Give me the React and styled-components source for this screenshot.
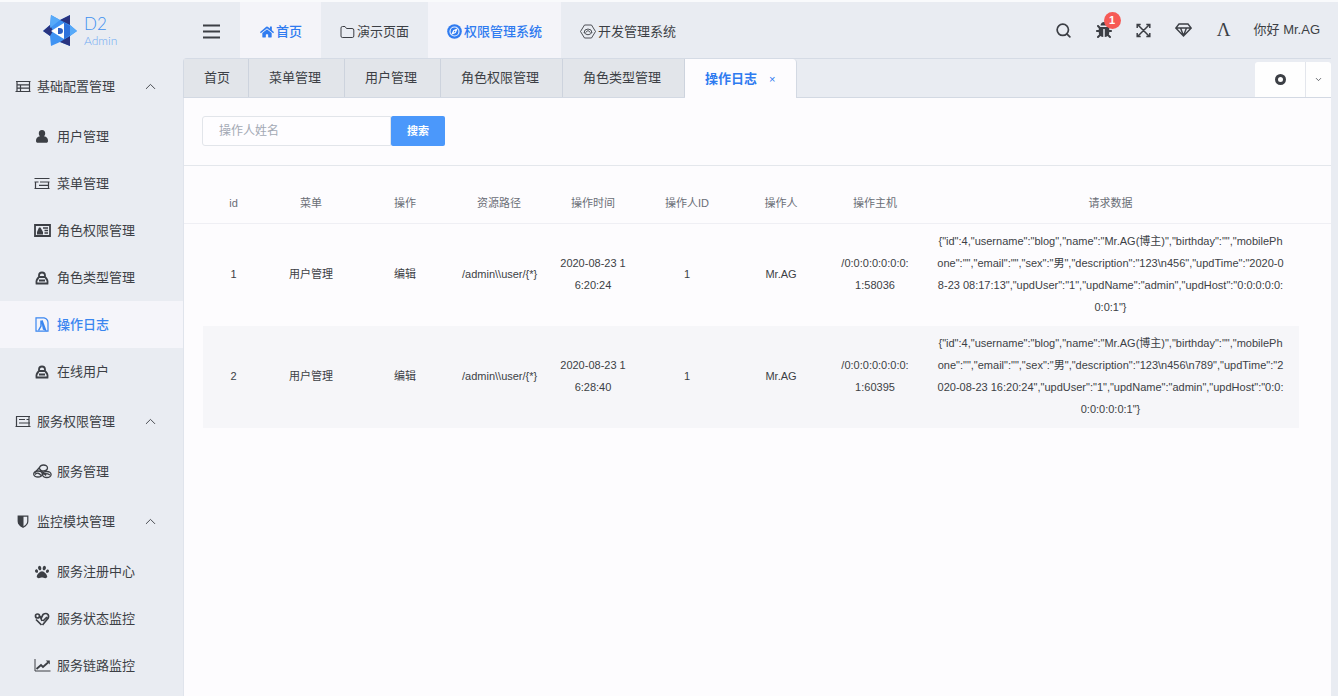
import React, { useState } from "react";
import styled, { createGlobalStyle } from "styled-components";
import { FaHome, FaBug, FaPaw } from "react-icons/fa";
import { Search, ChevronUp, ChevronDown } from "lucide-react";

const sideMenu = [
    {
        title: "基础配置管理",
        icon: "list",
        items: [
            { title: "用户管理", icon: "user" },
            { title: "菜单管理", icon: "rows" },
            { title: "角色权限管理", icon: "card" },
            { title: "角色类型管理", icon: "role" },
            { title: "操作日志", icon: "log", active: true },
            { title: "在线用户", icon: "role" },
        ],
    },
    {
        title: "服务权限管理",
        icon: "server",
        items: [{ title: "服务管理", icon: "cubes" }],
    },
    {
        title: "监控模块管理",
        icon: "shield",
        items: [
            { title: "服务注册中心", icon: "paw" },
            { title: "服务状态监控", icon: "pulse" },
            { title: "服务链路监控", icon: "chart" },
        ],
    },
];

const topMenu = [
    { title: "首页", icon: "home", active: true },
    { title: "演示页面", icon: "folder" },
    { title: "权限管理系统", icon: "compass", active: true },
    { title: "开发管理系统", icon: "hexagon" },
];

const tabs = ["首页", "菜单管理", "用户管理", "角色权限管理", "角色类型管理"];

const columns = ["id", "菜单", "操作", "资源路径", "操作时间", "操作人ID", "操作人", "操作主机", "请求数据"];

const logs = [
    {
        id: 1,
        menu: "用户管理",
        opt: "编辑",
        uri: "/admin\\\\user/{*}",
        time: "2020-08-23 1\n6:20:24",
        userId: 1,
        user: "Mr.AG",
        host: "/0:0:0:0:0:0:0:\n1:58036",
        body:
            '{"id":4,"username":"blog","name":"Mr.AG(博主)","birthday":"","mobilePh\n' +
            'one":"","email":"","sex":"男","description":"123\\n456","updTime":"2020-0\n' +
            '8-23 08:17:13","updUser":"1","updName":"admin","updHost":"0:0:0:0:0:\n' +
            '0:0:1"}',
    },
    {
        id: 2,
        menu: "用户管理",
        opt: "编辑",
        uri: "/admin\\\\user/{*}",
        time: "2020-08-23 1\n6:28:40",
        userId: 1,
        user: "Mr.AG",
        host: "/0:0:0:0:0:0:0:\n1:60395",
        body:
            '{"id":4,"username":"blog","name":"Mr.AG(博主)","birthday":"","mobilePh\n' +
            'one":"","email":"","sex":"男","description":"123\\n456\\n789","updTime":"2\n' +
            '020-08-23 16:20:24","updUser":"1","updName":"admin","updHost":"0:0:\n' +
            '0:0:0:0:0:1"}',
    },
];

const line = { fill: "none", stroke: "currentColor", strokeWidth: 1.2 };

const Icon = ({ name }) => {
    switch (name) {
        case "home":
            return <FaHome size={14} />;
        case "paw":
            return <FaPaw size={14} />;
        case "card":
            return (
                <svg width="17" height="13" viewBox="0 0 17 13" {...line}>
                    <path d="M1 1h15v11H1z" strokeWidth="1.800" />
                    <path d="M3 10.500V8l2-4.500h1.500L9 8v2.500z" fill="currentColor" stroke="none" />
                    <path d="M9 4h5M10.500 6.500H14M10.500 9H14" strokeWidth="1.500" />
                </svg>
            );
        case "folder":
            return (
                <svg width="15" height="14" viewBox="0 0 15 14" {...line} strokeWidth="1">
                    <path d="M1 11V3q0-1.500 1.500-1.500H5L6.500 3.500h5.500q1.800 0 1.800 1.500v6q0 1.500-1.500 1.500h-10Q1 12.500 1 11z" />
                </svg>
            );
        case "compass":
            return (
                <svg width="15" height="15" viewBox="0 0 15 15">
                    <circle cx="7.5" cy="7.500" r="7.300" fill="#2f7bf0" />
                    <circle cx="7.5" cy="7.500" r="4.500" fill="none" stroke="#e8f0fd" strokeWidth="1.2" />
                    <path d="M11 4 8.700 9 4 11 6.200 6.200z" fill="#fff" />
                    <path d="M7.500 6.500 8.500 8 6.500 8.500z" fill="#2f7bf0" />
                </svg>
            );
        case "hexagon":
            return (
                <svg width="16" height="15" viewBox="0 0 16 15" {...line} strokeWidth="0.9">
                    <path d="M4.500 1h7l4 6.500-4 6.500h-7l-4-6.500z" />
                    <path d="M4 9a4 4 0 0 1 8 0M4 8.500q4 4.500 8 0M5.500 8.500 8 6.500l2.500 2" />
                </svg>
            );
        case "list":
            return (
                <svg width="16" height="13" viewBox="0 0 16 13" {...line}>
                    <path d="M1 1.500h14.500M.5 11.500h15M2 1.500v10M5.500 4.500v7M14.500 1.500v10M2 4.800h12.500M2 8.200h12.500" />
                </svg>
            );
        case "rows":
            return (
                <svg width="16" height="13" viewBox="0 0 16 13" {...line}>
                    <path d="M.5 1.500h15M.5 11.500h15M1.500 5v6.500M.5 5h4M6 5h9.500M5 8.300h9M14.500 5v6.500" />
                </svg>
            );
        case "server":
            return (
                <svg width="16" height="13" viewBox="0 0 16 13" {...line}>
                    <path d="M1 1.500h14M.5 11.500h15M1.500 1.500v10M14 1.500v10M4 4.500h6M4 8h11M11.500 4.500h3" />
                </svg>
            );
        case "user":
            return (
                <svg width="14" height="15" viewBox="0 0 14 15" fill="currentColor">
                    <path d="M7 1c2.200 0 3.200 1.500 3.200 3.200 0 1.200-.5 2.300-1.200 3 2.600.6 4 2 4 4.600 0 1.500-.6 2-2 2H3c-1.400 0-2-.5-2-2 0-2.600 1.400-4 4-4.600-.7-.7-1.200-1.800-1.200-3C3.800 2.500 4.800 1 7 1z" />
                </svg>
            );
        case "role":
            return (
                <svg width="14" height="14" viewBox="0 0 14 14" {...line} strokeWidth="1.8">
                    <path d="M4 6V4.500a3 3 0 0 1 6 0V6M3.500 6h7M3.500 6.500Q1 9 1.500 12.500h11Q13 9 10.500 6.500M4 9.500h6" />
                </svg>
            );
        case "log":
            return (
                <svg width="14" height="15" viewBox="0 0 14 15" {...line}>
                    <path d="M1 .8h8q4 1 4 5v8.400H1z" />
                    <path d="M6 3.500V9L3.500 13.500M7 3.500l3.500 9.500-2-1z" strokeWidth="1.500" />
                </svg>
            );
        case "cubes":
            return (
                <svg width="19" height="15" viewBox="0 0 19 15" {...line} strokeWidth="1.300">
                    <ellipse cx="10.5" cy="4" rx="4" ry="3" />
                    <ellipse cx="5" cy="10" rx="4.300" ry="3" />
                    <ellipse cx="13.8" cy="10.500" rx="4.300" ry="3" />
                    <path d="M6.500 3.500 2 8.500M7 5.500l6 6M2 10.500q3-3 6 1M10 10q4-1 7 1" />
                </svg>
            );
        case "shield":
            return (
                <svg width="12" height="13" viewBox="0 0 12 13">
                    <path d="M1.200 1.200h9.600v5c0 2.800-2 4.600-4.800 6-2.800-1.400-4.800-3.200-4.800-6z" {...line} />
                    <path d="M1 1h5.500v11.500C3 11 1 9 1 6.200z" fill="currentColor" />
                </svg>
            );
        case "pulse":
            return (
                <svg width="16" height="14" viewBox="0 0 16 14" {...line} strokeWidth="1.700">
                    <circle cx="3.5" cy="4" r="2" />
                    <path d="M2 7.500 7.500 13M7 6.500 9 2.500q3-2 5 0 1.500 3-1 5L8.500 13M6 4l2 5M9 9l4-4" />
                </svg>
            );
        case "chart":
            return (
                <svg width="17" height="13" viewBox="0 0 17 13" {...line}>
                    <path d="M1 0v12h15.500" strokeWidth="1" />
                    <path d="M2.500 10 7 6l2 2 5-4.500" strokeWidth="1.800" />
                    <path d="M11.800 1.500h4v4z" fill="currentColor" stroke="none" />
                </svg>
            );
        default:
            return null;
    }
};

const Logo = () => (
    <svg width="34" height="34" viewBox="0 0 34 34">
        <path d="M8 1l9 5 10-5v10l7 6-7 5v10l-10-4-9 4-1-10-7-5 7-6z" fill="#3f93f3" />
        <path d="M27 1v10l-10-5zM0 17l7-6 3 6-3 5zM27 32l-10-4 10-6z" fill="#29337f" />
        <path d="M20 8 27 12v9l-7 5z" fill="#2f72dc" />
        <path d="M27 11l7 6-7 5zM8 1l9 5-10 8z" fill="#57aaf9" />
        <path d="M8 17l13-8v16z" fill="#fff" />
        <path d="M15 14h1.500q3.500 0 3.500 3t-3.500 3H15z" fill="#2c5fc4" />
    </svg>
);

const CrossArrows = () => (
    <svg width="15" height="15" viewBox="0 0 15 15" {...line} strokeWidth="1.500">
        <path d="M2 2l11 11M13 2 2 13M1.200 5V1.500h3.500M10.300 1.500h3.500V5M13.800 10v3.500h-3.500M4.700 13.500H1.200V10" />
    </svg>
);

const Diamond = () => (
    <svg width="17" height="14" viewBox="0 0 17 14" {...line} strokeWidth="1.400">
        <path d="M4 1h9l3.200 4L8.500 13 .8 5zM1 5h15M5.500 5l3 7.500 3-7.500" />
    </svg>
);

function App() {
    const [name, setName] = useState("");

    const renderGroups = () => {
        return sideMenu.map((group) => (
            <React.Fragment key={group.title}>
                <GroupTitle type="button" aria-expanded="true">
                    <IconBox $width={16}>
                        <Icon name={group.icon} />
                    </IconBox>
                    <GroupName>{group.title}</GroupName>
                    <ChevronUp size={17} strokeWidth={1.3} />
                </GroupTitle>
                {group.items.map((item) => (
                    <SideLink key={item.title} href="#" $active={item.active}>
                        <IconBox $width={20}>
                            <Icon name={item.icon} />
                        </IconBox>
                        {item.title}
                    </SideLink>
                ))}
            </React.Fragment>
        ));
    };

    const renderRows = () => {
        return logs.map((log) => (
            <Row key={log.id}>
                <Gutter />
                <Cell>{log.id}</Cell>
                <Cell>{log.menu}</Cell>
                <Cell>{log.opt}</Cell>
                <Cell>{log.uri}</Cell>
                <Cell>{log.time}</Cell>
                <Cell>{log.userId}</Cell>
                <Cell>{log.user}</Cell>
                <Cell>{log.host}</Cell>
                <Cell>{log.body}</Cell>
                <Gutter />
            </Row>
        ));
    };

    return (
        <>
            <GlobalStyle />
            <Page>
                <Sidebar>
                    <Brand>
                        <Logo />
                        <BrandText>
                            <BrandName>D2</BrandName>
                            <BrandSub>Admin</BrandSub>
                        </BrandText>
                    </Brand>
                    {renderGroups()}
                </Sidebar>
                <Main>
                    <Header>
                        <Toggle type="button" aria-label="折叠菜单">
                            <svg width="17" height="15" viewBox="0 0 17 15" fill="none" stroke="currentColor" strokeWidth="2">
                                <path d="M0 1.500h17M0 7.500h17M0 13.500h17" />
                            </svg>
                        </Toggle>
                        {topMenu.map((item) => (
                            <TopLink key={item.title} href="#" $active={item.active}>
                                <IconBox $width={15}>
                                    <Icon name={item.icon} />
                                </IconBox>
                                {item.title}
                            </TopLink>
                        ))}
                        <Tools>
                            <Tool type="button" aria-label="搜索">
                                <Search size={17} strokeWidth={2.4} />
                            </Tool>
                            <Tool type="button" aria-label="日志">
                                <FaBug size={16} />
                                <Badge>1</Badge>
                            </Tool>
                            <Tool type="button" aria-label="全屏">
                                <CrossArrows />
                            </Tool>
                            <Tool type="button" aria-label="主题">
                                <Diamond />
                            </Tool>
                            <Tool type="button" aria-label="字号">
                                <FontMark>Λ</FontMark>
                            </Tool>
                            <UserLink href="#">你好 Mr.AG</UserLink>
                        </Tools>
                    </Header>
                    <TabBar>
                        {tabs.map((tab, index) => (
                            <Tab key={tab} type="button" $home={index === 0}>
                                {tab}
                            </Tab>
                        ))}
                        <ActiveTab type="button">
                            操作日志
                            <TabClose>×</TabClose>
                        </ActiveTab>
                        <TabControl>
                            <ControlButton type="button" $width={50} aria-label="关闭全部">
                                <Ring />
                            </ControlButton>
                            <ControlButton type="button" $width={26} aria-label="更多">
                                <ChevronDown size={9} strokeWidth={2} />
                            </ControlButton>
                        </TabControl>
                    </TabBar>
                    <Panel>
                        <SearchBar>
                            <SearchInput
                                aria-label="操作人姓名"
                                placeholder="操作人姓名"
                                value={name}
                                onChange={(e) => setName(e.target.value)}
                            />
                            <SearchButton type="submit">搜索</SearchButton>
                        </SearchBar>
                        <Table>
                            <colgroup>
                                <Col $width={19} />
                                <Col $width={61} />
                                {columns.slice(1, 8).map((column) => (
                                    <Col key={column} $width={94} />
                                ))}
                                <col />
                                <Col $width={32} />
                            </colgroup>
                            <thead>
                                <tr>
                                    <HeadGutter />
                                    {columns.map((column) => (
                                        <HeadCell key={column}>{column}</HeadCell>
                                    ))}
                                    <HeadGutter />
                                </tr>
                            </thead>
                            <tbody>{renderRows()}</tbody>
                        </Table>
                    </Panel>
                </Main>
            </Page>
        </>
    );
}

export default App;

const GlobalStyle = createGlobalStyle`
    * {
        box-sizing: border-box;
    }
    body {
        margin: 0;
        background: #e9ecf2;
        color: #3c3f45;
        font: 13px/20px "Liberation Sans", "Noto Sans CJK SC", sans-serif;
    }
    button,
    input {
        font: inherit;
        color: inherit;
    }
    button {
        border: 0;
        padding: 0;
        background: none;
        cursor: pointer;
    }
    a {
        color: inherit;
        text-decoration: none;
    }
`;
const Page = styled.div`
    display: flex;
    min-height: 100vh;
    border-top: 2px solid #f9fafc;
    padding-right: 7px;
`;
const Sidebar = styled.nav`
    flex: 0 0 183px;
    display: flex;
    flex-direction: column;
`;
const Brand = styled.div`
    display: flex;
    align-items: center;
    gap: 7px;
    height: 58px;
    padding-left: 43px;
`;
const BrandText = styled.div`
    display: flex;
    flex-direction: column;
    font-family: Lato, "Liberation Sans", sans-serif;
    font-weight: 300;
`;
const BrandName = styled.span`
    color: #3f90f0;
    font-size: 17px;
    line-height: 20px;
`;
const BrandSub = styled.span`
    color: #6faaf2;
    font-size: 12px;
    line-height: 14px;
`;
const IconBox = styled.span`
    display: inline-flex;
    flex: 0 0 ${(props) => props.$width}px;
    justify-content: center;
    align-items: center;
`;
const GroupTitle = styled.button`
    display: flex;
    align-items: center;
    gap: 6px;
    height: 53px;
    padding: 0 24px 0 15px;
    text-align: left;
`;
const GroupName = styled.span`
    flex: 1;
`;
const SideLink = styled.a`
    display: flex;
    align-items: center;
    gap: 5px;
    height: 47px;
    padding-left: 32px;
    color: ${(props) => (props.$active ? "#3a86f0" : "inherit")};
    font-weight: ${(props) => (props.$active ? 500 : 400)};
    background: ${(props) => (props.$active ? "#f5f5fa" : "transparent")};
`;
const Main = styled.main`
    flex: 1;
    min-width: 0;
    display: flex;
    flex-direction: column;
`;
const Header = styled.header`
    display: flex;
    height: 56px;
`;
const Toggle = styled.button`
    display: flex;
    justify-content: center;
    align-items: center;
    width: 57px;
    padding-top: 3px;
`;
const TopLink = styled.a`
    display: flex;
    align-items: center;
    gap: 2px;
    padding: 3px 19px 0;
    white-space: nowrap;
    color: ${(props) => (props.$active ? "#2f7bf0" : "inherit")};
    font-weight: ${(props) => (props.$active ? 500 : 400)};
    background: ${(props) => (props.$active ? "#f4f4f9" : "transparent")};
`;
const Tools = styled.div`
    display: flex;
    align-items: center;
    margin-left: auto;
    padding-right: 11px;
`;
const Tool = styled.button`
    position: relative;
    display: flex;
    justify-content: center;
    align-items: center;
    width: 40px;
    height: 40px;
`;
const Badge = styled.span`
    position: absolute;
    top: 2px;
    right: 3px;
    width: 17px;
    height: 17px;
    border-radius: 9px;
    background: #f65a55;
    color: #fff;
    font-size: 11px;
    font-weight: 700;
    line-height: 17px;
`;
const FontMark = styled.span`
    font: 19px/20px "Liberation Serif", serif;
`;
const UserLink = styled.a`
    padding-left: 10px;
`;
const TabBar = styled.div`
    display: flex;
    height: 40px;
    border-top: 1px solid #d5dbe5;
    border-bottom: 1px solid #d3d9e3;
    border-left: 1px solid #d3d9e3;
    border-top-left-radius: 4px;
`;
const Tab = styled.button`
    padding: ${(props) => (props.$home ? "0 18px 0 20px" : "0 23px 0 20px")};
    border-right: 1px solid #cdd3dd;
    background: #e2e5ea;
    white-space: nowrap;
`;
const ActiveTab = styled.button`
    display: flex;
    align-items: center;
    gap: 12px;
    height: 39px;
    padding: 0 20px;
    border-right: 1px solid #d3d9e3;
    border-radius: 0 4px 0 0;
    background: #fdfcfe;
    color: #2f7bf0;
    font-weight: 700;
    white-space: nowrap;
`;
const TabClose = styled.span`
    font-size: 11px;
    font-weight: 400;
`;
const TabControl = styled.div`
    display: flex;
    margin: 3px 0 0 auto;
    border-radius: 3px 3px 0 0;
    background: #fefefe;
`;
const ControlButton = styled.button`
    display: flex;
    justify-content: center;
    align-items: center;
    width: ${(props) => props.$width}px;

    & + & {
        border-left: 1px solid #e3e6ec;
    }
`;
const Ring = styled.span`
    width: 11px;
    height: 11px;
    border: 3px solid #3c3f45;
    border-radius: 50%;
`;
const Panel = styled.section`
    flex: 1;
    border-left: 1px solid #e0e4ec;
    background: #fdfcfe;
`;
const SearchBar = styled.form`
    display: flex;
    height: 68px;
    padding: 18px;
    border-bottom: 1px solid #e4e7ec;
`;
const SearchInput = styled.input`
    width: 189px;
    height: 30px;
    padding: 0 16px;
    border: 1px solid #e2e5ea;
    border-radius: 3px 0 0 3px;
    background: #fefdff;
    font-size: 12px;

    &::placeholder {
        color: #a3a9b4;
        opacity: 1;
    }
`;
const SearchButton = styled.button`
    width: 54px;
    height: 30px;
    border-radius: 2px;
    background: #4b98fb;
    color: #fff;
    font-size: 11px;
    font-weight: 700;
`;
const Table = styled.table`
    width: 100%;
    margin-top: 17px;
    border-collapse: collapse;
    table-layout: fixed;
    font-size: 11px;
    line-height: 22px;
    text-align: center;
`;
const Col = styled.col`
    width: ${(props) => props.$width}px;
`;
const HeadCell = styled.th`
    height: 40px;
    padding: 0;
    border-bottom: 1px solid #efeff4;
    color: #6a6e76;
    font-weight: 400;
`;
const HeadGutter = styled.td`
    padding: 0;
    border-bottom: 1px solid #efeff4;
`;
const Cell = styled.td`
    padding: 6px 10px 8px;
    white-space: pre-line;
`;
const Gutter = styled.td`
    padding: 0;
`;
const Row = styled.tr`
    &:nth-child(even) ${Cell} {
        background: #f6f6f9;
    }
`;
